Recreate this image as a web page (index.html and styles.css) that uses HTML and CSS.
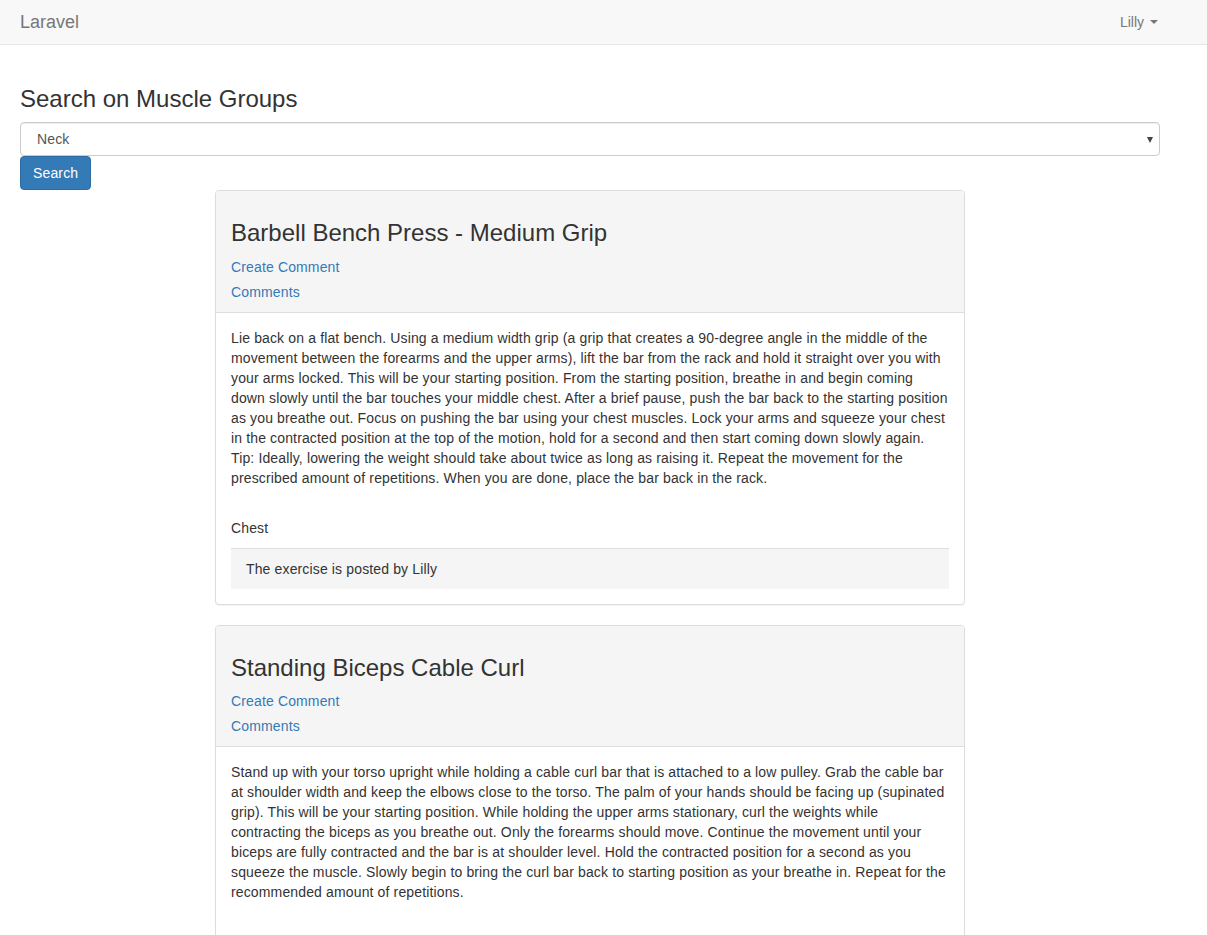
FILE: index.html
```html
<!DOCTYPE html>
<html lang="en">
<head>
<meta charset="utf-8">
<title>Laravel</title>
<link rel="stylesheet" href="styles.css">
</head>
<body>
<nav class="navbar">
  <a class="brand" href="#">Laravel</a>
  <a class="user" href="#">Lilly<span class="caret"></span></a>
</nav>
<main class="content">
  <h3 class="page-title">Search on Muscle Groups</h3>
  <form class="search-form">
    <div class="select-wrap">
      <select class="form-control">
        <option>Neck</option>
        <option>Chest</option>
        <option>Biceps</option>
      </select>
    </div>
    <button type="button" class="btn-primary">Search</button>
  </form>

  <div class="panel">
    <div class="panel-heading">
      <h3 class="panel-title">Barbell Bench Press - Medium Grip</h3>
      <div class="links">
        <a href="#">Create Comment</a>
        <a href="#">Comments</a>
      </div>
    </div>
    <div class="panel-body">
      <p class="desc">Lie back on a flat bench. Using a medium width grip (a grip that creates a 90-degree angle in the middle of the movement between the forearms and the upper arms), lift the bar from the rack and hold it straight over you with your arms locked. This will be your starting position. From the starting position, breathe in and begin coming down slowly until the bar touches your middle chest. After a brief pause, push the bar back to the starting position as you breathe out. Focus on pushing the bar using your chest muscles. Lock your arms and squeeze your chest in the contracted position at the top of the motion, hold for a second and then start coming down slowly again. Tip: Ideally, lowering the weight should take about twice as long as raising it. Repeat the movement for the prescribed amount of repetitions. When you are done, place the bar back in the rack.</p>
      <p class="group">Chest</p>
      <div class="panel-footer">The exercise is posted by Lilly</div>
    </div>
  </div>

  <div class="panel">
    <div class="panel-heading">
      <h3 class="panel-title">Standing Biceps Cable Curl</h3>
      <div class="links">
        <a href="#">Create Comment</a>
        <a href="#">Comments</a>
      </div>
    </div>
    <div class="panel-body">
      <p class="desc">Stand up with your torso upright while holding a cable curl bar that is attached to a low pulley. Grab the cable bar at shoulder width and keep the elbows close to the torso. The palm of your hands should be facing up (supinated grip). This will be your starting position. While holding the upper arms stationary, curl the weights while contracting the biceps as you breathe out. Only the forearms should move. Continue the movement until your biceps are fully contracted and the bar is at shoulder level. Hold the contracted position for a second as you squeeze the muscle. Slowly begin to bring the curl bar back to starting position as your breathe in. Repeat for the recommended amount of repetitions.</p>
      <p class="group">Biceps</p>
      <div class="panel-footer">The exercise is posted by Lilly</div>
    </div>
  </div>
</main>
</body>
</html>
```
FILE: styles.css
```css
html, body {
  margin: 0;
  padding: 0;
}
body {
  font-family: "Liberation Sans", Arial, Helvetica, sans-serif;
  font-size: 14px;
  line-height: 20px;
  letter-spacing: 0.14px;
  color: #333;
  background: #fff;
}
a {
  color: #337ab7;
  text-decoration: none;
}
.navbar {
  height: 44px;
  background: #f8f8f8;
  border-bottom: 1px solid #e7e7e7;
  display: flex;
  align-items: center;
  justify-content: space-between;
  padding: 0 49px 0 20px;
}
.brand {
  font-size: 18px;
  line-height: 20px;
  letter-spacing: 0;
  color: #777;
}
.user {
  display: flex;
  align-items: center;
  color: #777;
  font-size: 14px;
  letter-spacing: 0;
}
.caret {
  display: inline-block;
  width: 0;
  height: 0;
  margin-left: 6px;
  border-top: 4px solid #777;
  border-left: 4px solid transparent;
  border-right: 4px solid transparent;
}
.content {
  width: 1140px;
  padding: 21px 0 0 20px;
}
.page-title {
  font-size: 24px;
  font-weight: 500;
  line-height: 1.1;
  letter-spacing: 0;
  margin: 20px 0 10px;
  color: #333;
}
.search-form {
  display: flex;
  flex-direction: column;
  align-items: flex-start;
}
.select-wrap {
  position: relative;
  width: 100%;
}
.select-wrap::after {
  content: "";
  position: absolute;
  right: 7px;
  top: 15px;
  border-top: 6px solid #444;
  border-left: 3px solid transparent;
  border-right: 3px solid transparent;
}
.form-control {
  display: block;
  width: 100%;
  height: 34px;
  padding: 0 16px;
  font-family: inherit;
  font-size: 14px;
  letter-spacing: 0.14px;
  color: #555;
  background: #fff;
  border: 1px solid #ccc;
  border-radius: 4px;
  box-shadow: inset 0 1px 1px rgba(0,0,0,.075);
  -webkit-appearance: none;
  appearance: none;
  outline: none;
}
.btn-primary {
  height: 34px;
  padding: 6px 12px;
  font-family: inherit;
  font-size: 14px;
  line-height: 20px;
  letter-spacing: 0.14px;
  color: #fff;
  background: #337ab7;
  border: 1px solid #2e6da4;
  border-radius: 4px;
  cursor: pointer;
}
.panel {
  width: 748px;
  margin: 0 auto 20px;
  background: #fff;
  border: 1px solid #ddd;
  border-radius: 4px;
  box-shadow: 0 1px 1px rgba(0,0,0,.05);
}
.panel-heading {
  padding: 10px 15px;
  background: #f5f5f5;
  border-bottom: 1px solid #ddd;
  border-radius: 3px 3px 0 0;
}
.panel-title {
  font-size: 24px;
  font-weight: 500;
  line-height: 1.1;
  letter-spacing: 0;
  margin: 19px 0 10px;
  color: #333;
}
.links {
  display: flex;
  flex-direction: column;
  align-items: flex-start;
  gap: 5px;
}
.panel-body {
  padding: 15px;
}
.desc {
  margin: 0 0 30px;
}
.group {
  margin: 0 0 10px;
}
.panel-footer {
  padding: 10px 15px;
  background: #f5f5f5;
  border-top: 1px solid #ddd;
}
```
